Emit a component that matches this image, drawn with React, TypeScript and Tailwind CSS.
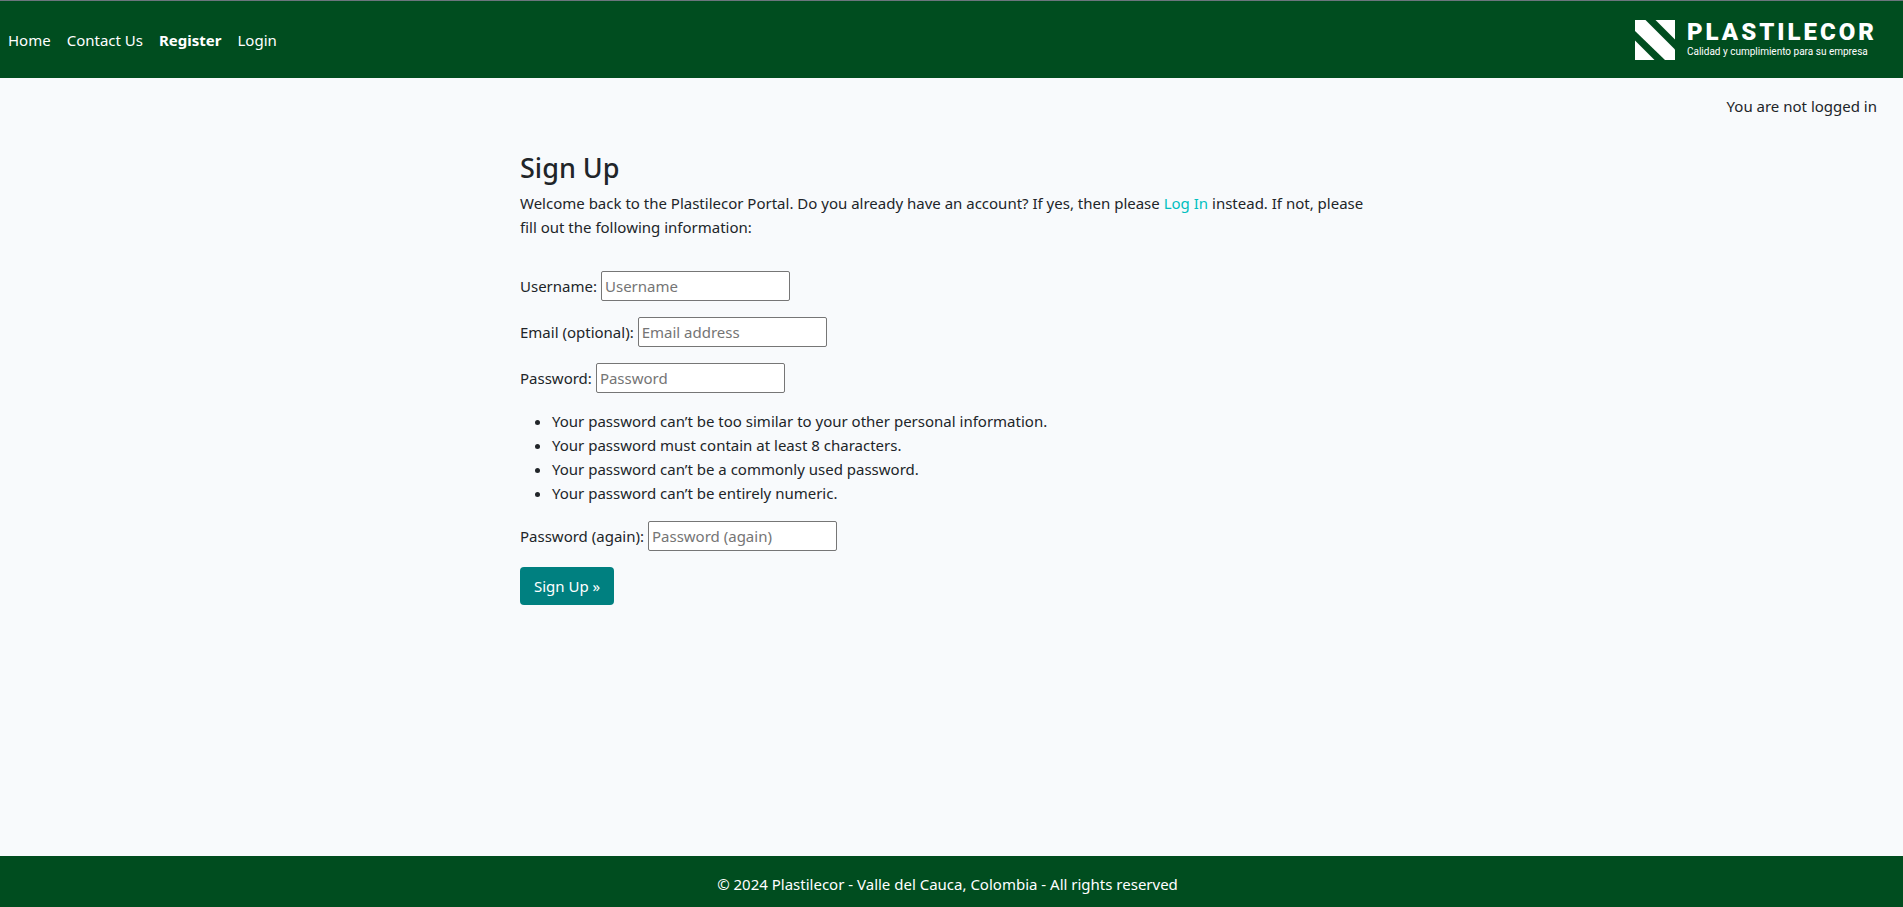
const navLinks = [
  { label: "Home", active: false },
  { label: "Contact Us", active: false },
  { label: "Register", active: true },
  { label: "Login", active: false },
];

const passwordRules = [
  "Your password can’t be too similar to your other personal information.",
  "Your password must contain at least 8 characters.",
  "Your password can’t be a commonly used password.",
  "Your password can’t be entirely numeric.",
];

type FieldProps = { id: string; label: string; type: string; placeholder: string };

function Field({ id, label, type, placeholder }: FieldProps) {
  return (
    <div className="mb-4 flex items-center gap-1">
      <label htmlFor={id}>{label}</label>
      <input
        id={id}
        name={id}
        type={type}
        placeholder={placeholder}
        className="h-[30px] w-[189px] rounded-xs border border-[#767676] bg-white px-[3px] text-[#212529] placeholder:text-[#757575]"
      />
    </div>
  );
}

function Logo() {
  return (
    <a href="#" className="flex items-center gap-3 text-white">
      <svg viewBox="0 0 40 40" className="size-10" fill="currentColor" aria-hidden="true">
        <path d="M0 0H10.500L40 29.500V40H30L0 11Z" />
        <path d="M20.500 0H40V19.500Z" />
        <path d="M0 20.500L19.500 40H0Z" />
      </svg>
      <span className="flex flex-col pt-1">
        <span className="font-[Roboto,sans-serif] text-2xl leading-5 font-black tracking-[3px]">PLASTILECOR</span>
        <span className="font-[Roboto,sans-serif] text-[10px] leading-5">
          Calidad y cumplimiento para su empresa
        </span>
      </span>
    </a>
  );
}

export default function App() {
  return (
    <div className="flex min-h-screen flex-col bg-[#f8fafc] font-['Noto_Sans','Open_Sans',sans-serif] text-[15px] leading-6 text-[#212529]">
      <header className="flex min-h-[78px] items-center justify-between border-t border-[#6c757d] bg-[#004d1f] pr-[26px] pl-2 text-white">
        <nav className="flex gap-4">
          {navLinks.map((link) => (
            <a key={link.label} href="#" className={link.active ? "font-bold" : ""}>
              {link.label}
            </a>
          ))}
        </nav>
        <Logo />
      </header>

      <p className="mt-4 pr-[26px] text-right">You are not logged in</p>

      <main className="mx-auto w-full max-w-[863px] grow pt-8">
        <h1 className="mb-[5px] text-[27px] leading-9 font-medium">Sign Up</h1>
        <p className="mb-8">
          Welcome back to the Plastilecor Portal. Do you already have an account? If yes, then please{" "}
          <a href="#" className="text-[#00bfbf]">
            Log In
          </a>{" "}
          instead. If not, please fill out the following information:
        </p>
        <form onSubmit={(e) => e.preventDefault()}>
          <Field id="username" label="Username:" type="text" placeholder="Username" />
          <Field id="email" label="Email (optional):" type="email" placeholder="Email address" />
          <Field id="password1" label="Password:" type="password" placeholder="Password" />
          <ul className="mb-4 list-disc pl-8">
            {passwordRules.map((rule) => (
              <li key={rule}>{rule}</li>
            ))}
          </ul>
          <Field id="password2" label="Password (again):" type="password" placeholder="Password (again)" />
          <button type="submit" className="h-[38px] rounded bg-[#008080] px-[14px] text-white">
            Sign Up »
          </button>
        </form>
      </main>

      <footer className="bg-[#004d1f] pt-4 pr-2 pb-[11px] text-center text-white">
        © 2024 Plastilecor - Valle del Cauca, Colombia - All rights reserved
      </footer>
    </div>
  );
}
